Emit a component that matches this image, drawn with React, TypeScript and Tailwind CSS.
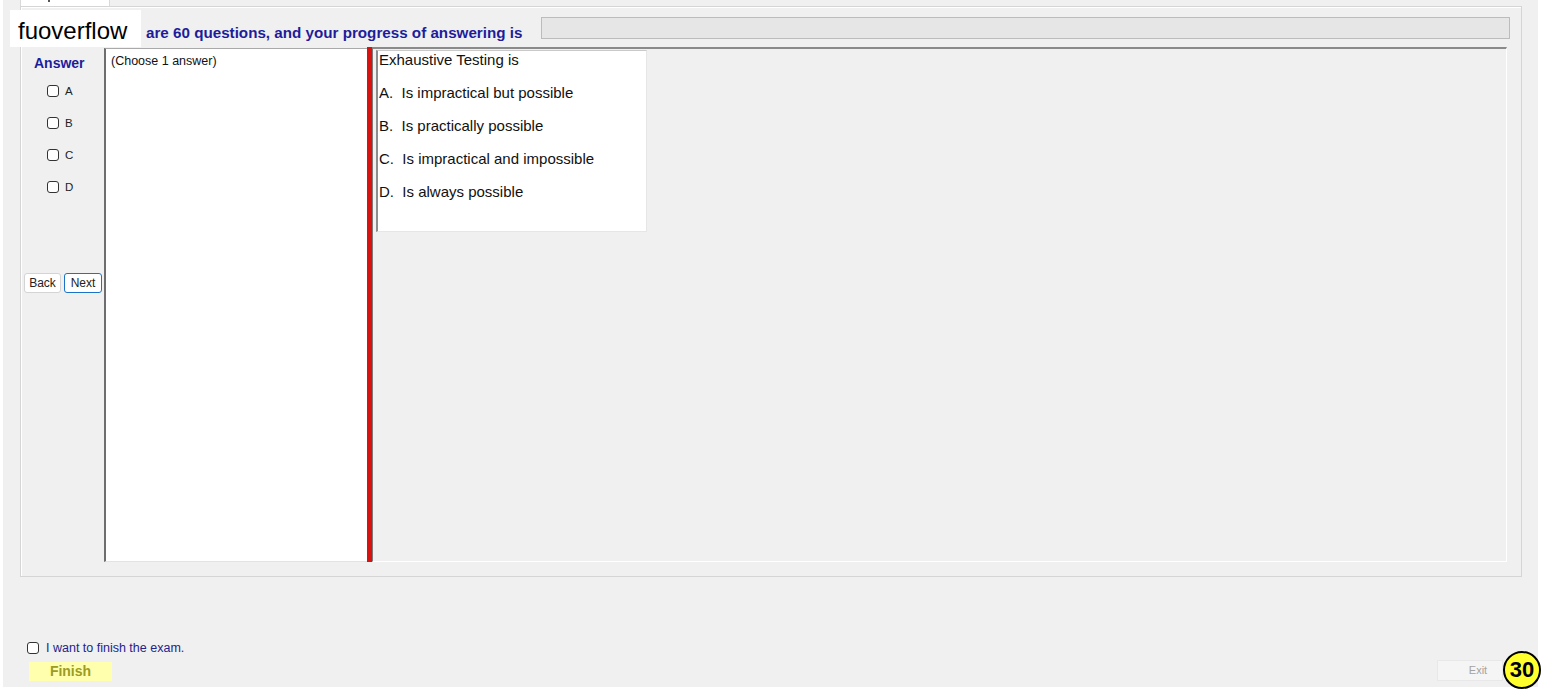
import React from "react";

function Box() {
  return <div className="w-[12px] h-[12px] border border-[#333333] rounded-[3px] bg-white shrink-0" />;
}

export default function App() {
  const opts = ["A", "B", "C", "D"];
  const answers = [
    "A.  Is impractical but possible",
    "B.  Is practically possible",
    "C.  Is impractical and impossible",
    "D.  Is always possible",
  ];
  return (
    <div className="w-[1542px] h-[690px] bg-white relative overflow-hidden font-['Liberation_Sans',Arial,sans-serif]">
      <div className="ml-[3px] w-[1535px] h-[687px] bg-[#f0f0f0] flex flex-col">
        {/* tab strip */}
        <div className="h-[6px] flex">
          <div className="ml-[17px] w-[90px] h-[6px] bg-white border-x border-[#d9d9d9] relative">
            <div className="absolute left-[27px] top-0 w-[2px] h-[2px] bg-[#555]" />
          </div>
        </div>
        {/* group box */}
        <div className="ml-[17px] w-[1502px] h-[571px] border border-[#d5d5d5] shadow-[inset_1px_1px_0_#ffffff] flex flex-col">
          {/* header */}
          <div className="h-[40px] flex items-start">
            <div className="pl-[125px] w-[520px] mt-[17px] text-[15.2px] leading-[17px] font-bold text-[#1d1d9b] whitespace-nowrap">
              are 60 questions, and your progress of answering is
            </div>
            <div className="mt-[10px] w-[969px] h-[22px] bg-[#e6e6e6] border border-[#bcbcbc]" />
          </div>
          {/* content */}
          <div className="h-[515px] flex">
            {/* answer column */}
            <div className="w-[83px] flex flex-col">
              <div className="mt-[8px] pl-[13px] text-[14px] leading-[17px] font-bold text-[#1d1d9b]">Answer</div>
              <div className="flex flex-col">
                {opts.map((o, i) => (
                  <div key={o} className={`flex items-center gap-[6px] pl-[26px] h-[14px] ${i === 0 ? "mt-[12px]" : "mt-[18px]"}`}>
                    <Box />
                    <span className="text-[11.5px] leading-[12px] text-[#222]">{o}</span>
                  </div>
                ))}
              </div>
              <div className="mt-[79px] flex gap-[3px] pl-[3px]">
                <div className="w-[37px] h-[20px] bg-white border border-[#d4d4d4] rounded-[3px] flex items-center justify-center text-[12px] text-[#222]">
                  Back
                </div>
                <div className="w-[38px] h-[20px] bg-white border border-[#1a73c8] rounded-[3px] flex items-center justify-center text-[12px] text-[#222]">
                  Next
                </div>
              </div>
            </div>
            {/* choose panel */}
            <div className="w-[263px] mt-[1px] bg-white border-l-2 border-l-[#6e6e6e] border-t border-t-[#a9a9a9] border-b border-b-[#e3e3e3]">
              <div className="pl-[5px] pt-[5px] text-[12.5px] leading-[14px] text-[#111]">(Choose 1 answer)</div>
            </div>
            {/* red splitter */}
            <div className="w-[5px] bg-[#d9120f]" />
            {/* right panel */}
            <div className="w-[1135px] border-l border-l-[#7a7a7a] border-t-2 border-t-[#8a8a8a] border-r border-r-[#ffffff] border-b border-b-[#ffffff] flex items-start">
              <div className="ml-[3px] mt-[1px] w-[271px] h-[182px] bg-white border-l-2 border-l-[#8d8d8d] border-t border-t-[#c9c9c9] border-r border-r-[#e6e6e6] border-b border-b-[#e6e6e6] pl-[1px]">
                <div className="h-[20px] text-[15px] leading-[17px] text-[#111]">Exhaustive Testing is</div>
                {answers.map((a) => (
                  <div key={a} className="h-[33px] pt-[13px] text-[15px] leading-[17px] text-[#111] whitespace-pre">
                    {a}
                  </div>
                ))}
              </div>
            </div>
          </div>
        </div>
        {/* bottom */}
        <div className="flex flex-col">
          <div className="mt-[64px] pl-[24px] flex items-center gap-[7px] h-[13px]">
            <Box />
            <span className="text-[12.5px] leading-[14px] text-[#23238c] mt-[1px]">I want to finish the exam.</span>
          </div>
          <div className="mt-[6px] flex justify-between items-start">
            <div className="ml-[26px] mt-[2px] w-[83px] h-[19px] bg-[#ffffae] flex items-center justify-center text-[14px] font-bold text-[#9c9c22]">
              Finish
            </div>
            <div className="mr-[35px] w-[66px] h-[21px] bg-[#f5f5f5] border border-[#e8e8e8] flex items-center justify-center pl-[16px] text-[11px] text-[#a3a3a3]">
              Exit
            </div>
          </div>
        </div>
      </div>
      {/* watermark overlay */}
      <div className="absolute left-[10px] top-[10px] w-[131px] h-[37px] bg-white flex items-center pl-[8px] pt-[5px] text-[24px] text-black">
        fuoverflow
      </div>
      {/* timer badge */}
      <div className="absolute left-[1503px] top-[651px] w-[38px] h-[38px] rounded-full bg-[#ffff2e] border-2 border-black flex items-center justify-center text-[22px] font-bold text-black leading-none">
        30
      </div>
    </div>
  );
}
